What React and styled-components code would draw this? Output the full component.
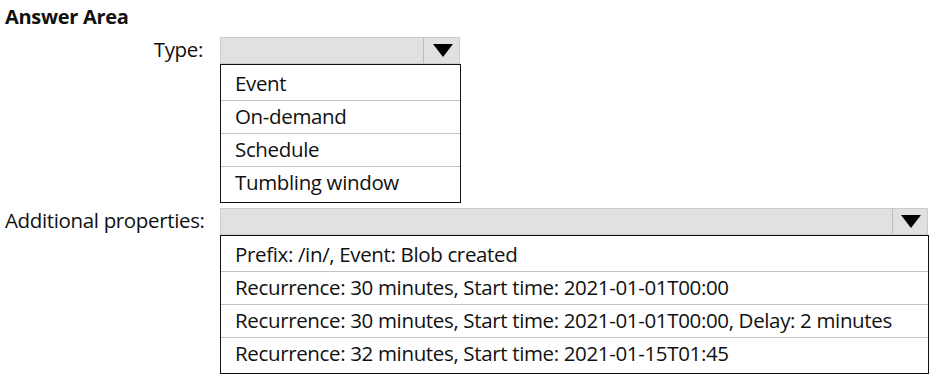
import React from "react";
import styled, { createGlobalStyle } from "styled-components";

const Global = createGlobalStyle`
  html, body { margin: 0; padding: 0; background: #fff; }
  body { font-family: "Open Sans", "Noto Sans", sans-serif; color: #111; }
`;

const Page = styled.div`
  width: 947px;
  height: 380px;
  padding: 4px 0 0 5px;
  box-sizing: border-box;
  overflow: hidden;
`;

const Title = styled.div`
  font-weight: 700;
  font-size: 20px;
  line-height: 26px;
  height: 33px;
  letter-spacing: -0.3px;
`;

const Form = styled.div`
  display: grid;
  grid-template-columns: 198px auto;
  column-gap: 17px;
  row-gap: 5px;
  align-items: start;
`;

const Label = styled.div`
  text-align: right;
  font-size: 20.5px;
  line-height: 24px;
  letter-spacing: -0.35px;
  white-space: nowrap;
`;

const Select = styled.div`
  width: ${(p) => p.$width}px;
  display: flex;
  flex-direction: column;
`;

const Bar = styled.div`
  height: 27px;
  box-sizing: border-box;
  background: #e1e1e1;
  border: 1px solid #cbcbcb;
  display: flex;
  justify-content: flex-end;
`;

const ArrowBox = styled.div`
  width: ${(p) => p.$width}px;
  border-left: 1px solid #bcbcbc;
  display: flex;
  align-items: center;
  justify-content: center;
  padding-left: 2px;
`;

const List = styled.div`
  border: 1px solid #111;
  padding: 3px 0 3px;
  background: #fff;
  width: ${(p) => p.$width}px;
  box-sizing: border-box;
`;

const Item = styled.div`
  height: 32px;
  line-height: 30px;
  padding-left: 14px;
  font-size: 20.5px;
  letter-spacing: -0.35px;
  white-space: nowrap;
  box-sizing: content-box;
  & + & {
    border-top: 1px solid #c4c4c4;
  }
`;

const Arrow = () => (
  <svg width="20" height="13" viewBox="0 0 20 13">
    <polygon points="0,0 20,0 10,13" fill="#000" />
  </svg>
);

const Dropdown = ({ width, arrowWidth, items }) => (
  <Select $width={width}>
    <Bar>
      <ArrowBox $width={arrowWidth}>
        <Arrow />
      </ArrowBox>
    </Bar>
    <List $width={width + 1}>
      {items.map((t) => (
        <Item key={t}>{t}</Item>
      ))}
    </List>
  </Select>
);

export default function App() {
  return (
    <>
      <Global />
      <Page>
        <Title>Answer Area</Title>
        <Form>
          <Label>Type:</Label>
          <Dropdown
            width={240}
            arrowWidth={33}
            items={["Event", "On-demand", "Schedule", "Tumbling window"]}
          />
          <Label>Additional properties:</Label>
          <Dropdown
            width={708}
            arrowWidth={32}
            items={[
              "Prefix: /in/, Event: Blob created",
              "Recurrence: 30 minutes, Start time: 2021-01-01T00:00",
              "Recurrence: 30 minutes, Start time: 2021-01-01T00:00, Delay: 2 minutes",
              "Recurrence: 32 minutes, Start time: 2021-01-15T01:45",
            ]}
          />
        </Form>
      </Page>
    </>
  );
}
